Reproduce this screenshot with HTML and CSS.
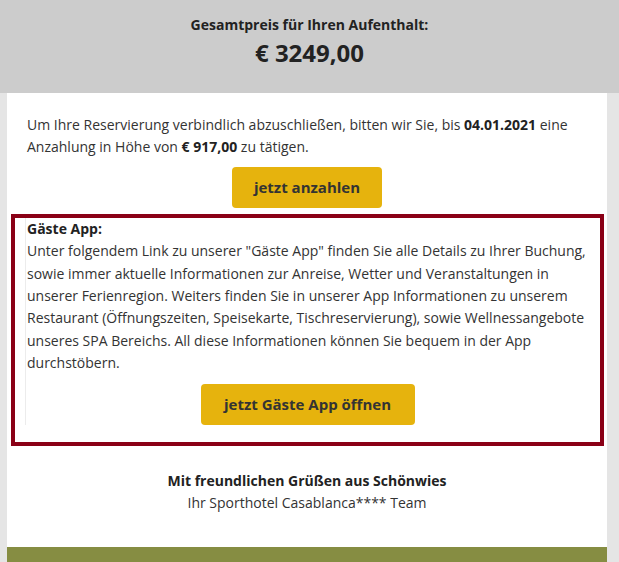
FILE: index.html
```html
<!DOCTYPE html>
<html lang="de">
<head>
<meta charset="utf-8">
<title>Gesamtpreis</title>
<link rel="stylesheet" href="styles.css">
</head>
<body>
<header class="total">
  <div class="total-label">Gesamtpreis für Ihren Aufenthalt:</div>
  <div class="total-price">€ 3249,00</div>
</header>
<main class="mail">
  <p class="intro">Um Ihre Reservierung verbindlich abzuschließen, bitten wir Sie, bis <b>04.01.2021</b> eine Anzahlung in Höhe von <b>€ 917,00</b> zu tätigen.</p>
  <div class="btn-row"><a class="btn btn-pay" href="#">jetzt anzahlen</a></div>
  <section class="app-box">
    <div class="app-inner">
      <div class="app-title">Gäste App:</div>
      <p class="app-text">Unter folgendem Link zu unserer "Gäste App" finden Sie alle Details zu Ihrer Buchung, sowie immer aktuelle Informationen zur Anreise, Wetter und Veranstaltungen in unserer Ferienregion. Weiters finden Sie in unserer App Informationen zu unserem Restaurant (Öffnungszeiten, Speisekarte, Tischreservierung), sowie Wellnessangebote unseres SPA Bereichs. All diese Informationen können Sie bequem in der App durchstöbern.</p>
      <div class="btn-row btn-row-app"><a class="btn btn-app" href="#">jetzt Gäste App öffnen</a></div>
    </div>
  </section>
  <div class="closing">
    <div class="closing-bold">Mit freundlichen Grüßen aus Schönwies</div>
    <div class="closing-team">Ihr Sporthotel Casablanca**** Team</div>
  </div>
  <footer class="footer"></footer>
</main>
</body>
</html>
```
FILE: styles.css
```css
html, body {
  margin: 0;
  padding: 0;
}
body {
  background: #e5e5e5;
  font-family: "Open Sans", "Liberation Sans", sans-serif;
  color: #333333;
  font-size: 14px;
  line-height: 22.4px;
}
.total {
  background: #cccccc;
  height: 93px;
  box-sizing: border-box;
  padding-top: 13px;
  text-align: center;
  color: #222222;
}
.total-label {
  font-weight: 700;
  font-size: 14px;
  line-height: 24px;
}
.total-price {
  font-weight: 700;
  font-size: 24px;
  line-height: 30px;
  margin-top: 1px;
}
.mail {
  width: 600px;
  margin-left: 7px;
  background: #ffffff;
}
.intro {
  margin: 0;
  padding: 21px 20px 0 20px;
}
.intro b {
  color: #222222;
}
.btn-row {
  display: flex;
  justify-content: center;
  padding-top: 8px;
}
.btn {
  display: block;
  background: #e6b30d;
  color: #333333;
  font-weight: 700;
  font-size: 15px;
  line-height: 41px;
  height: 41px;
  border-radius: 4px;
  text-decoration: none;
  text-align: center;
}
.btn-pay {
  width: 150px;
}
.btn-app {
  width: 214px;
}
.app-box {
  margin: 6px 3px 0 4px;
  border: 4px solid #8a0016;
  padding: 0 12px 17px 10px;
}
.app-inner {
  border-left: 1px solid #ececec;
  padding-left: 1px;
}
.app-title {
  font-weight: 700;
  color: #222222;
}
.app-text {
  margin: 0;
}
.btn-row-app {
  padding-top: 9px;
}
.closing {
  text-align: center;
  padding: 24px 0 33px;
}
.closing-bold {
  font-weight: 700;
  color: #222222;
}
.footer {
  background: #868d42;
  height: 16px;
}
```
